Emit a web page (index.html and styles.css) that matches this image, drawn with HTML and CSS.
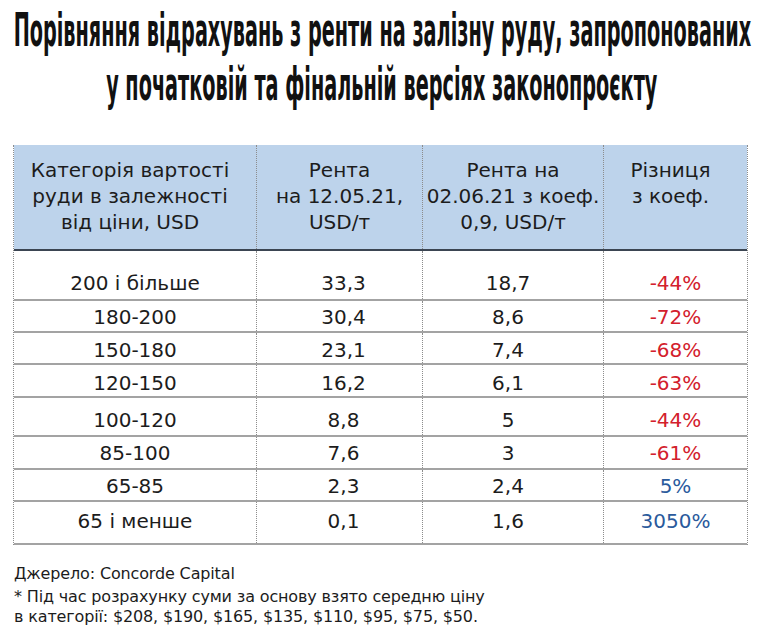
FILE: index.html
```html
<!DOCTYPE html>
<html lang="uk">
<head>
<meta charset="utf-8">
<title>Порівняння відрахувань з ренти на залізну руду</title>
<link rel="stylesheet" href="styles.css">
</head>
<body>
<header class="title">
  <div class="title-line"><span class="title-text">Порівняння відрахувань з ренти на залізну руду, запропонованих</span></div>
  <div class="title-line"><span class="title-text">у початковій та фінальній версіях законопроєкту</span></div>
</header>

<div class="table">
  <div class="row head">
    <div class="cell c1">Категорія вартості<br>руди в залежності<br>від ціни, USD</div>
    <div class="cell c2">Рента<br>на 12.05.21,<br>USD/т</div>
    <div class="cell c3">Рента на<br>02.06.21 з коеф.<br>0,9, USD/т</div>
    <div class="cell c4">Різниця<br>з коеф.</div>
  </div>
  <div class="row body">
    <div class="cell c1">200 і більше</div><div class="cell c2">33,3</div><div class="cell c3">18,7</div><div class="cell c4 neg">-44%</div>
  </div>
  <div class="row body">
    <div class="cell c1">180-200</div><div class="cell c2">30,4</div><div class="cell c3">8,6</div><div class="cell c4 neg">-72%</div>
  </div>
  <div class="row body">
    <div class="cell c1">150-180</div><div class="cell c2">23,1</div><div class="cell c3">7,4</div><div class="cell c4 neg">-68%</div>
  </div>
  <div class="row body">
    <div class="cell c1">120-150</div><div class="cell c2">16,2</div><div class="cell c3">6,1</div><div class="cell c4 neg">-63%</div>
  </div>
  <div class="row body">
    <div class="cell c1">100-120</div><div class="cell c2">8,8</div><div class="cell c3">5</div><div class="cell c4 neg">-44%</div>
  </div>
  <div class="row body">
    <div class="cell c1">85-100</div><div class="cell c2">7,6</div><div class="cell c3">3</div><div class="cell c4 neg">-61%</div>
  </div>
  <div class="row body">
    <div class="cell c1">65-85</div><div class="cell c2">2,3</div><div class="cell c3">2,4</div><div class="cell c4 pos">5%</div>
  </div>
  <div class="row body">
    <div class="cell c1">65 і менше</div><div class="cell c2">0,1</div><div class="cell c3">1,6</div><div class="cell c4 pos">3050%</div>
  </div>
</div>

<footer class="notes">
  <p class="source">Джерело: Concorde Capital</p>
  <p class="note">* Під час розрахунку суми за основу взято середню ціну<br>в категорії: $208, $190, $165, $135, $110, $95, $75, $50.</p>
</footer>
</body>
</html>
```

FILE: styles.css
```css
html, body {
  margin: 0;
  padding: 0;
  background: #ffffff;
}

body {
  width: 764px;
  height: 641px;
  overflow: hidden;
  color: #1c1c1c;
  font-family: "DejaVu Sans", "Noto Sans", sans-serif;
}

.title {
  padding-top: 3px;
}

.title-line {
  display: flex;
  justify-content: center;
  overflow: hidden;
  height: 54px;
  line-height: 54px;
}

.title-text {
  flex: none;
  white-space: nowrap;
  font-family: "DejaVu Sans Condensed", "DejaVu Sans", sans-serif;
  font-stretch: condensed;
  font-weight: 700;
  font-size: 47px;
  color: #111111;
  transform: scaleX(0.455);
  transform-origin: center;
}

.table {
  margin-top: 34px;
  margin-left: 13px;
  width: 735px;
  box-sizing: border-box;
  border-left: 1px dotted #8c8c8c;
  border-right: 1px dotted #8c8c8c;
}

.row {
  display: grid;
  grid-template-columns: 243px 166px 181px 143px;
  box-sizing: border-box;
  border-bottom: 2px solid #a3a3a3;
}

.cell {
  box-sizing: border-box;
  text-align: center;
  border-right: 1px dotted #8c8c8c;
}

.cell.c4 {
  border-right: none;
}

.head {
  height: 106px;
  background: #bdd3eb;
  border-bottom: 2px solid #3b4552;
}

.head .cell {
  padding-top: 12px;
  font-size: 20px;
  line-height: 26px;
}

.head .c1 {
  padding-right: 10px;
}

.head .c4 {
  padding-right: 10px;
}

.body .cell {
  font-size: 20px;
  line-height: 24px;
}

.body .c2 {
  padding-left: 8px;
}

.body .c3 {
  padding-right: 10px;
}

.body:nth-child(2) { height: 50px; }
.body:nth-child(2) .cell { padding-top: 20px; }
.body:nth-child(3) { height: 32px; }
.body:nth-child(3) .cell { padding-top: 4px; }
.body:nth-child(4) { height: 32px; }
.body:nth-child(4) .cell { padding-top: 5px; }
.body:nth-child(5) { height: 33px; }
.body:nth-child(5) .cell { padding-top: 6px; }
.body:nth-child(6) { height: 39px; }
.body:nth-child(6) .cell { padding-top: 10px; }
.body:nth-child(7) { height: 33px; }
.body:nth-child(7) .cell { padding-top: 4px; }
.body:nth-child(8) { height: 32px; }
.body:nth-child(8) .cell { padding-top: 4px; }
.body:nth-child(9) { height: 43px; }
.body:nth-child(9) .cell { padding-top: 7px; }

.neg {
  color: #d3202c;
}

.pos {
  color: #2a5a9c;
}

.notes {
  padding-left: 14px;
  padding-top: 19px;
  font-size: 16px;
  letter-spacing: -0.15px;
}

.notes p {
  margin: 0;
}

.source {
  line-height: 20px;
  margin-bottom: 3px !important;
}

.note {
  line-height: 19.5px;
}
```
